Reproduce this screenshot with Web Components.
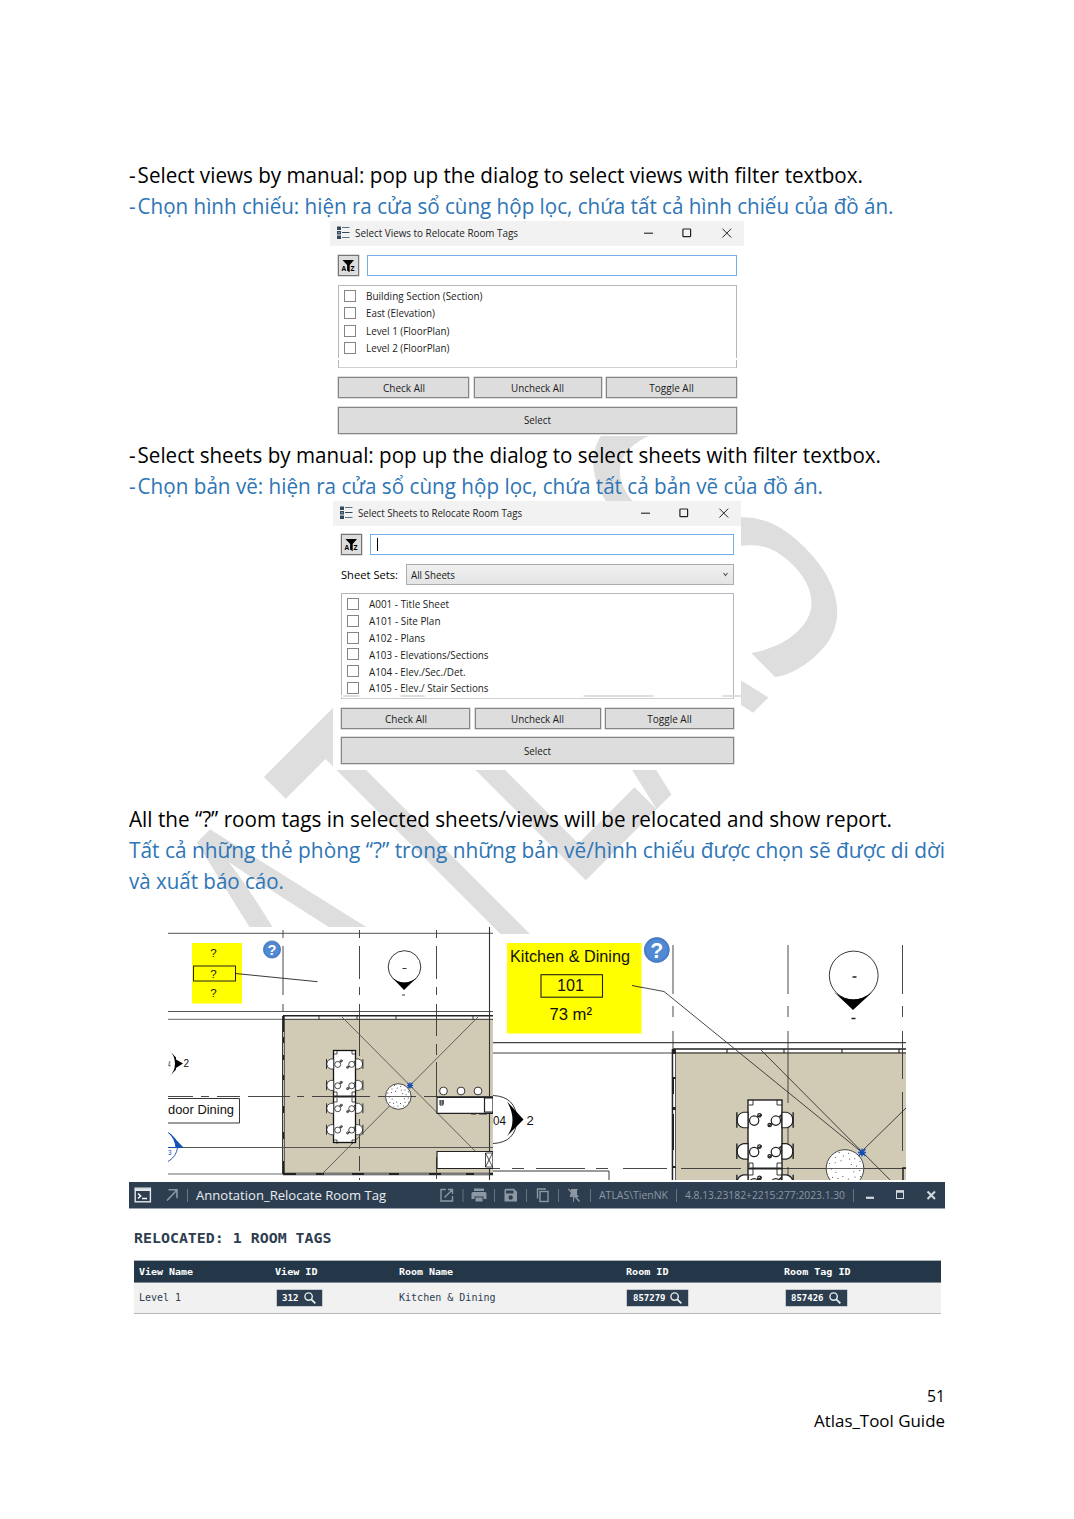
<!DOCTYPE html>
<html lang="vi">
<head>
<meta charset="utf-8">
<title>Atlas_Tool Guide</title>
<style>
html,body{margin:0;padding:0;background:#fff}
body{font-family:"Open Sans","Noto Sans",sans-serif;color:#000}
</style>
</head>
<body>
<guide-page></guide-page>
<script>
const make = (name, html, setup) => {
  const t = document.createElement('template');
  t.innerHTML = html;
  customElements.define(name, class extends HTMLElement {
    connectedCallback() {
      if (this.shadowRoot) return;
      this.attachShadow({mode:'open'}).appendChild(t.content.cloneNode(true));
      if (setup) setup(this, this.shadowRoot);
    }
  });
};

/* One line of text set to an exact measure */
make('fit-text', `<style>
:host{display:block;flex:none;white-space:nowrap}
span{display:inline-block;transform-origin:0 50%;white-space:nowrap}
</style><span><slot></slot></span>`, (el, r) => {
  const w = +el.getAttribute('w'), s = r.querySelector('span');
  el.style.width = w + 'px';
  const n = s.getBoundingClientRect().width;
  if (n) s.style.transform = `scaleX(${w / n})`;
});

make('water-mark', `<style>:host{display:block;position:absolute;inset:0;z-index:0}
svg{display:block}text{font:421px "Open Sans",sans-serif;fill:#dedede}</style>
<svg width="1074" height="1519" viewBox="0 0 1074 1519"><g transform="rotate(-45) scale(.595 1)">
<text y="1036.6" x="-885 -613.5 -391 -181.5 95">ATLAS</text></g></svg>`);

make('win-button', `<style>:host{display:flex;align-items:center;justify-content:center;box-sizing:border-box;background:#ddd;border:1px solid #858585;box-shadow:0 0 0 .4px #aaa;font-size:10px;color:#1a1a1a}
</style><slot></slot>`);

make('check-row', `<style>:host{display:flex;align-items:center;height:var(--row);font-size:10px;color:#1a1a1a;line-height:var(--row)}
i{width:10px;height:10px;border:1px solid #858585;background:#fff;margin:0 9.5px 0 5px;flex:none;position:relative;top:-.7px}
</style><i></i><slot></slot>`);

make('filter-button', `<style>:host{display:block;width:19px;height:19px;border:1px solid #747474;background:#ddd;box-shadow:0 0 0 .4px #aaa;flex:none}svg{display:block}text{font:bold 6.5px "Open Sans",sans-serif}</style>
<svg width="19" height="19" viewBox="0 0 19 19"><path d="M3.5 4h11.5l-4.3 5v7.2l-2.6-1.6V9z" fill="#000"/><text x="2.6" y="14.8" textLength="4.6" lengthAdjust="spacingAndGlyphs">A</text><text x="11.6" y="14.8" textLength="4" lengthAdjust="spacingAndGlyphs">Z</text></svg>`);

make('title-bar', `<style>:host{display:flex;align-items:center;height:25px;background:#f2f2f2;padding-left:7px;padding-bottom:2px;font-size:10.3px;color:#222;box-sizing:border-box}
svg{display:block;flex:none}.c{margin-left:auto;margin-right:11.5px}slot{display:block}fit-text{line-height:23px}.l{margin-right:5px}</style>
<svg class="l" width="13" height="13" viewBox="0 0 13 13"><g fill="#34485c"><path d="M0 .5h4v3.6H0zM0 5h4v3.6H0zM0 9.4h4V13H0z"/><path d="M5 1.2h7.5v.9H5zM5 6h7.5v.9H5zM5 10.9h7.5v.9H5z"/></g><path d="M1.4 6h1.4v1.2H1.4z" fill="#aab"/></svg>
<slot></slot>
<svg class="c" width="90" height="12" viewBox="0 0 90 12" fill="none" stroke="#222"><path d="M1 6.2h9" stroke-width="1.1"/><rect x="39.9" y="2" width="7.7" height="7.7" rx=".7" stroke-width="1.2"/><path d="M79.4 1.7l8.8 8.8m0-8.8l-8.8 8.8" stroke-width="1"/></svg>`);

make('select-dialog', `<style>
:host{display:block;position:relative;background:#fff;box-sizing:border-box;flex:none}
.b{padding:var(--pt) 7px 0 8px;display:flex;flex-direction:column}
.f{display:flex;gap:8px;align-items:center;height:21px}
.in{flex:1;border:1px solid #76aee8;box-sizing:border-box;height:21px;display:flex;align-items:center;padding-left:6px}
.caret{width:1px;height:13px;background:#000;display:none}
:host([caret]) .caret{display:block}
.list{margin-top:var(--lg);height:var(--lh);box-sizing:border-box;border:1px solid #b4b6be;border-bottom:1.5px solid #cfd0d6;padding-top:var(--lp)}
.btns{display:grid;grid-template-columns:var(--cols);justify-content:space-between;margin-top:9px}
.btns win-button{height:21px}
.s{height:27px;margin-top:var(--sg)}
</style>
<slot name="title"></slot>
<div class="b"><div class="f"><filter-button></filter-button><div class="in"><div class="caret"></div></div></div>
<slot name="sets"></slot>
<div class="list"><slot></slot></div>
<div class="btns"><win-button><fit-text w="42">Check All</fit-text></win-button><win-button><fit-text w="53">Uncheck All</fit-text></win-button><win-button><fit-text w="44.5">Toggle All</fit-text></win-button></div>
<win-button class="s"><fit-text w="27">Select</fit-text></win-button></div>
<slot name="seam"></slot>`);

make('sheet-sets', `<style>:host{display:flex;align-items:center;height:21px;margin-top:9px;font-size:11px}
.c{margin-left:8px;flex:1;height:21px;box-sizing:border-box;border:1px solid #acacac;background:linear-gradient(#f0f0f0,#e4e4e4);display:flex;align-items:center;justify-content:space-between;padding:0 5px 0 4px;font-size:10px;color:#1a1a1a;line-height:18px}
svg{display:block}</style><fit-text w="57">Sheet Sets:</fit-text><div class="c"><fit-text w="44">All Sheets</fit-text><svg width="5" height="5" viewBox="0 0 5 5"><path d="M.5 1l2 2.6L4.5 1" fill="none" stroke="#555" stroke-width="1.1"/></svg></div>`);

/* Floor plans before and after relocating the room tag */
const chairs = (cx, top, rows, pitch, hw, k) => {
  let s = '';
  for (let i = 0; i < rows; i++) {
    const y = top + i * pitch + (k < 1.2 && i > 1 ? 1.5 : 0);
    for (const d of [-1, 1]) {
      s += `<g transform="translate(${cx} ${y}) scale(${d * k} ${k})"><path d="M${hw / k} -5h3q4 1 4 5t-4 5h-3z" fill="#fff" stroke-width=".8"/><path d="M${hw / k + 7.2} -5v10" stroke-width=".9"/></g>`;
      s += `<g transform="translate(${cx} ${y}) scale(${k})" fill="none" stroke-width=".8"><circle cx="${d * 7}" cy=".4" r="3"/><circle cx="${d < 0 ? -3.6 : 3}" cy="${d < 0 ? -3 : 3.2}" r="1.1"/><path d="M${d < 0 ? '-5 -2l3 -1.5' : '5 2.4l-3 1.4M9 -2l1.4 -1.2v4'}"/></g>`;
    }
  }
  return s;
};
const speck = (cx, cy, r) => {
  let s = '';
  for (let i = 5; i < 30; i++) {
    const a = i * 2.4, q = r * Math.sqrt((i + .5) / 31) * .95;
    s += `<circle cx="${(cx + q * Math.cos(a)).toFixed(1)}" cy="${(cy + q * Math.sin(a)).toFixed(1)}" r=".5" fill="#222" stroke="none"/>`;
  }
  return `<circle cx="${cx}" cy="${cy}" r="${r}" fill="#fff" stroke="#222" stroke-width=".8"/>${s}`;
};
const help = (x, y, r) => `<circle cx="${x}" cy="${y}" r="${r}" fill="#4a80cb" stroke="#4472b4" stroke-width=".8"/><circle cx="${x}" cy="${y}" r="${r * .84}" fill="#5089d4" stroke="none"/><text x="${x}" y="${y + r * .6}" text-anchor="middle" style="fill:#fff" font-weight="bold" font-size="${r * 1.7}">?</text>`;

make('room-plans', `<style>:host{display:block;position:relative}svg{display:block}text{font-family:"Liberation Sans",sans-serif;fill:#111;stroke:none}</style>
<svg width="738" height="254" viewBox="168 927 738 254" stroke="#222" stroke-width=".9">
<defs><clipPath id="l"><rect x="168" y="927" width="325" height="253"/></clipPath><clipPath id="r"><rect x="493" y="934" width="413" height="246"/></clipPath></defs>
<g clip-path="url(#l)"><rect x="168" y="927" width="325" height="253" fill="#fff" stroke="none"/>
<path d="M168 933.3h325" stroke="#777" stroke-width="1.3"/><path d="M168 1011.5h325" stroke="#555" stroke-width="1"/><path d="M168 1019.3h115M168 1174h115" stroke="#555"/>
<rect x="283" y="1016" width="212" height="158" fill="#d1cab5" stroke="none"/>
<path d="M283 1017.4h210" stroke="#fff" stroke-width="3"/><path d="M283 1015.8h210" stroke-width="1.6"/><path d="M283 1019.3h210M319 1016v3.5M357 1016v3.5M396 1016v3.5M473 1016v3.5"/>
<path d="M283.4 1016v158" stroke-width="2.6"/><path d="M283.6 1032v5m0 6v12m0 5v15m0 5v26m0 7v19m0 7v22" stroke="#fff" stroke-width=".8"/>
<path d="M283 1174h210" stroke-width="2.4"/><path d="M296 1174h20m8 0h28m12 0h25m10 0h30m12 0h25m8 0h15" stroke="#fff" stroke-width=".8"/>
<path d="M283 930v8m0 8v49m0 9v7M359.500 930v8m0 8v33m0 8v8m0 9v52m0 7v6m0 50v30m0 7v15m0 7v17M436.500 930v8m0 8v33m0 8v8m0 9v32m0 8v11m0 7v35m0 60v22" stroke="#333"/>
<path d="M489.500 927v253" stroke="#333" stroke-width="1.1"/>
<path d="M168 1096.500h25m8 0h8m8 0h23m8 0h42m7 0h7m8 0h58m8 0h24m7 0h7m8 0h75" stroke="#333"/>
<path d="M168 1147.500h325" stroke="#555" stroke-width="1"/>
<path d="M342 1017l147 148M478 1017L322 1174" stroke="#555" stroke-width=".9"/>
<rect x="333.500" y="1050.500" width="22" height="92" fill="#fff" stroke="#111" stroke-width="1.3"/><path d="M333 1096.500h23" stroke-width="2"/><path d="M334 1054h3v-3m15 0v3h3m-21 38h3v4m15 0v-4h3m-21 10h3v-4m15 0v4h3m-21 38h3v4m15 0v-4h3" fill="none" stroke-width=".8"/>
${chairs(344.7,1064,4,21.4,11,1)}
${speck(398.300,1096.500,12.800)}<path d="M385 1096.500h26" stroke="#555"/>
<path d="M407.500 1083l5 5m0-5l-5 5m-.5-2.500h6m-3-3v6" stroke="#134fb4" stroke-width="1.200"/>
<g fill="#fff"><circle cx="443.500" cy="1091" r="3.900"/><circle cx="461" cy="1091" r="3.900"/><circle cx="478" cy="1091" r="3.900"/><path d="M437 1097.500h56v15.800h-56zM437 1151.500h56v17h-56zM484.500 1098h9v14h-9z" stroke-width="1.2"/></g>
<path d="M440 1101h4m-4 2h4m-4 2h3m0-5v5m-3-5v5M471 1114h5m3 0h8" stroke-width="1"/><path d="M485.500 1153h8v14h-8zm0 0l7 14m0-14l-7 14" fill="none" stroke-width=".8"/>
<rect x="192" y="943" width="50" height="60.500" fill="#ff0" stroke="none"/><rect x="193.500" y="966" width="42" height="15" fill="none" stroke-width="1"/>
<g font-size="11.500" text-anchor="middle"><text x="213.500" y="957">?</text><text x="213.500" y="977.500">?</text><text x="213.500" y="997">?</text></g>
<path d="M235.500 973.500l82 8.200"/>${help(272,949.500,8.600)}
<circle cx="404.500" cy="967" r="16.300" fill="#fff"/><path d="M392 977.500q12 10 25 0L404 990z" fill="#000" stroke="none"/><path d="M402.500 968.500h4m-4.500 26.500h3"/>
<path d="M168 1049l8 8.500v2l7 4-7 4.500v1.500l-8 8.500q7-6 7-14.500t-7-14.500" fill="#000" stroke="none"/>
<text x="183.500" y="1067" font-size="10">2</text><text x="168" y="1067" font-size="9" textLength="2.500" lengthAdjust="spacingAndGlyphs">4</text>
<path d="M168 1098.500h71.500v24.500H168" fill="#fff"/><text x="168" y="1114" font-size="13" textLength="66" lengthAdjust="spacingAndGlyphs">door Dining</text>
<g stroke="#134fb4"><path d="M168 1132.500q9 5 9.500 15-1 9-9.500 14" fill="none"/><path d="M169 1133l14 14.500h-7q-1-9-7-14.500z" fill="#134fb4"/><path d="M168 1147.500h15"/></g><text x="168" y="1155" font-size="8" textLength="3.500" lengthAdjust="spacingAndGlyphs" style="fill:#134fb4">3</text></g>
<g clip-path="url(#r)"><rect x="493" y="934" width="413" height="246" fill="#fff" stroke="none"/>
<path d="M493 1042.600h413M493 1053h180" stroke="#444" stroke-width="1.1"/>
<rect x="673" y="1049" width="240" height="140" fill="#d1cab5" stroke="none"/><path d="M674 1050.500h232" stroke="#fff" stroke-width="3"/><path d="M673 1049h233" stroke-width="1.700"/><path d="M673 1053h233M727 1049v4M784 1049v4M842 1049v4M899 1049v4" stroke-width="1.100"/>
<path d="M673.800 1049v131" stroke-width="4.200"/><path d="M674.200 1054v23m0 2v28m0 3v56m0 2v12" stroke="#fff" stroke-width="2"/><path d="M673.500 1079v15m0 20v36" stroke-width="1"/>
<path d="M673 945v49m0 12v11m0 14v18M788 945v49m0 12v11m0 14v72m0 13v42m0 9v13M902.500 945v49m0 12v11m0 14v48m0 13v59" stroke="#333"/>
<path d="M493 1168.500h7m12 0h12m12 0h49m11 0h12m15 0h44m14 0h60m12 0h12m13 0h50m12 0h82" stroke="#333"/>
<path d="M493 1171h116v10" fill="none"/>
<rect x="748" y="1100" width="34" height="90" fill="#fff" stroke="#111" stroke-width="1.300"/><path d="M748 1168.500h34" stroke-width="2"/><path d="M749 1105h4v-5m24 0v5h5m-33 62v-4h4v5m24 0v-5h5m-33 12h4v-6m24 0v6h5" fill="none"/>
${chairs(765,1120,3,31.300,17,1.550)}
${speck(845,1168.500,18.800)}<path d="M826 1168.500h38" stroke="#555"/>
<path d="M761 1050l145 146M861 1152l45-44M632 985.500l32 6 197 160" fill="none" stroke="#333" stroke-width=".9"/>
<path d="M858.500 1149l7 7m0-7l-7 7m-.5-3.500h8m-4-4v8" stroke="#134fb4" stroke-width="1.300"/>
<path d="M903 1180v-12h4" fill="none" stroke-width="1.500"/>
<rect x="507" y="943" width="134.500" height="90.500" fill="#ff0" stroke="none"/><rect x="541" y="974.700" width="61.500" height="22.500" fill="none" stroke-width="1.100"/>
<text x="510" y="961.500" font-size="17" textLength="120" lengthAdjust="spacingAndGlyphs">Kitchen &amp; Dining</text><text x="557" y="991.200" font-size="17" textLength="27" lengthAdjust="spacingAndGlyphs">101</text><text x="549.500" y="1020.300" font-size="17" textLength="42.500" lengthAdjust="spacingAndGlyphs">73 m²</text>
<path d="M632 985.500l10 2"/>${help(656.800,950,12.500)}
<circle cx="853.700" cy="975.500" r="24.400" fill="#fff"/><path d="M834 992q19 15 38.500 0L853 1010z" fill="#000" stroke="none"/><path d="M852.500 977h4m-5 41.500h4" stroke-width="1.500"/>
<path d="M493 1095.500q23 1 24 24-1 23-24 24" fill="none"/><path d="M507 1101.500l16.500 18L507 1136q11-15 0-34.500z" fill="#000" stroke="none"/>
<text x="526.500" y="1124.500" font-size="13">2</text><text x="493" y="1124.500" font-size="13" textLength="13" lengthAdjust="spacingAndGlyphs">04</text></g></svg>`);

make('console-bar', `<style>:host{display:flex;align-items:center;background:#2d3e50;border-bottom:1px solid #9aa3ac;box-sizing:border-box;height:27px;color:#8e98a3;font-size:11px;position:relative;width:816px;line-height:26px}
svg{display:block}.t{color:#e9edf0;font-size:13.5px;margin-left:8px}.a{margin-left:5px}.i{margin-left:53px}.u{margin-left:7px}.m{margin-left:8px}.v{margin-left:8px}.w{margin-left:8px}</style>
<svg class="a" width="54" height="26" viewBox="134 0 54 26" fill="none"><rect x="135.200" y="6.200" width="15.200" height="13.600" stroke="#e3e7ea" stroke-width="1.400"/><path d="M135 8h15.500" stroke="#e3e7ea" stroke-width="2"/><path d="M138 11.500l2.700 2.500-2.700 2.500M142 16.500h5" stroke="#fff" stroke-width="1.500"/><path d="M167 18.500L177 8M168.500 7.700h8.500v8.500" stroke="#8e98a3" stroke-width="1.600"/><path d="M187.500 7v13" stroke="#6c7884"/></svg>
<fit-text class="t" w="190">Annotation_Relocate Room Tag</fit-text>
<svg class="i" width="153" height="26" viewBox="439 0 153 26" fill="none" stroke="#8e98a3" stroke-width="1.400"><path d="M446 7.500h-5v11.500h11.500v-5M448 7.500h4.500V12M444.500 15.500l8-8"/><path d="M463 7v13M494.500 7v13M526.500 7v13M558.500 7v13M590.500 7v13" stroke="#65727f" stroke-width="1"/>
<g fill="#8e98a3" stroke="none"><path d="M474 6.500h10v2.500h-10zM473 10h12q1.500 0 1.500 1.500v5.500h-3v-2.500h-9V17h-3v-5.500q0-1.500 1.500-1.500zM475.500 15.500h7v4h-7z"/><path fill-rule="evenodd" d="M505.500 6.700h8.500l3 3v9.800h-12.500V7.700zM506 8.500v3h7.500v-3zM510.700 13.300a2.200 2.200 0 100 4.400 2.200 2.200 0 000-4.400z"/></g>
<rect x="540" y="9.500" width="8" height="10"/><path d="M537.500 16.500V7h8.500"/><path d="M571 7h7l-1 1.500v4l2 2.500h-3.300L571 9z" fill="#8e98a3" stroke="none"/><path d="M571.500 10.500l-1.500 4h3.500v5l.6-5" fill="#8e98a3" stroke-width=".8"/><path d="M568.500 7l11 12.500"/></svg>
<fit-text class="u" w="69">ATLAS\\TienNK</fit-text>
<svg class="m" width="1" height="26" viewBox="0 0 1 26"><path d="M.5 7v13" stroke="#65727f"/></svg>
<fit-text class="v" w="160">4.8.13.23182+2215:277:2023.1.30</fit-text>
<svg class="w" width="92" height="26" viewBox="853 0 92 26" fill="none" stroke="#d5dadd"><path d="M853.500 7v13" stroke="#65727f"/><path d="M866 15.800h8" stroke-width="2.200"/><rect x="896.500" y="9" width="7" height="7.500"/><path d="M896 9.500h8" stroke-width="2.500"/><path d="M927.500 9.500l7.500 7.500m0-7.500l-7.500 7.500" stroke-width="2"/></svg>`);

make('id-chip', `<style>:host{display:flex;align-items:center;gap:5px;height:16px;background:#2d3e50;color:#fff;padding:0 6px 0 5.500px;box-sizing:border-box;font-size:9px;line-height:16px;width:max-content;box-shadow:0 0 0 .5px #9aa3ac}svg{display:block}</style><slot></slot><svg width="12" height="12" viewBox="0 0 12 12" fill="none" stroke="#e9edf0"><circle cx="4.600" cy="4.600" r="3.700" stroke-width="1.400"/><path d="M7.300 7.300L11.300 11.300" stroke-width="1.800"/></svg>`);

make('report-view', `<style>:host{display:block;font-family:"DejaVu Sans Mono",monospace;color:#2d3e50;width:807px;padding-left:5px}
.h{font-weight:bold;font-size:13.500px;height:20px;line-height:20px;margin-top:19px}
.r{display:grid;grid-template-columns:136px 124px 226.500px 158.500px 1fr;padding-left:5px;align-items:center;box-sizing:border-box}
.r>*{justify-self:start}
.hd{background:#243748;color:#fff;font-weight:bold;font-size:9.300px;height:23px;margin-top:12px;line-height:21px;border-top:1px solid #aab3b8;border-bottom:1px solid #7f8b93}
.d{background:#f1f1f1;height:31px;line-height:30px;font-size:10px;border-bottom:1px solid #b5b8ba}id-chip{margin-left:1.500px}</style>
<div class="h"><fit-text w="197.500">RELOCATED: 1 ROOM TAGS</fit-text></div>
<div class="r hd"><fit-text w="54">View Name</fit-text><fit-text w="42.500">View ID</fit-text><fit-text w="54">Room Name</fit-text><fit-text w="42.500">Room ID</fit-text><fit-text w="66.500">Room Tag ID</fit-text></div>
<div class="r d"><fit-text w="42">Level 1</fit-text><id-chip><fit-text w="16.500"><b>312</b></fit-text></id-chip><fit-text w="96.500">Kitchen &amp; Dining</fit-text><id-chip><fit-text w="32.500"><b>857279</b></fit-text></id-chip><id-chip><fit-text w="32.500"><b>857426</b></fit-text></id-chip></div>`);

make('guide-page', `<style>
:host{display:block;position:relative;width:1074px;height:1519px;overflow:hidden;background:#fff}
main{position:relative;z-index:1;display:flex;flex-direction:column;padding:159px 129px 0}
p{margin:0;font-size:21.300px;line-height:31px;height:31px}
.vi{color:#2e75b6}
i{font-style:normal;letter-spacing:2px}
.d1{width:414px;height:215px;margin:0 0 0 201px;--pt:9px;--sg:8.500px;--row:17.300px;--lg:9px;--lh:83px;--lp:2px;--cols:131px 128px 131px}
.d2{width:408px;height:269px;margin:0 0 0 204px;--pt:8px;--sg:8px;--row:16.900px;--lg:8px;--lh:106px;--lp:2px;--cols:129px 126px 129px}
.g1{margin-top:3px}.g2{margin-top:33px}
room-plans{margin:31px 0 0 39px}console-bar{margin-top:1px}
.seam{position:absolute;left:0;right:0;top:193.500px;height:2px;background:linear-gradient(90deg,#fff 2%,#dedede 3% 6%,#fff 7% 16%,#dedede 17% 22%,#fff 23% 61%,#dedede 62% 78%,#fff 79% 95%,#dedede 96%)}
.s1{position:absolute;left:0;right:0;top:136.500px;height:2px;background:#fff}
footer{margin-top:70px;display:flex;flex-direction:column;align-items:flex-end;font-size:16.500px;line-height:24.500px;padding-right:.5px}
</style>
<water-mark></water-mark>
<main>
<p><fit-text w="734"><i>-</i>Select views by manual: pop up the dialog to select views with filter textbox.</fit-text></p>
<p class="vi"><fit-text w="764.500"><i>-</i>Chọn hình chiếu: hiện ra cửa sổ cùng hộp lọc, chứa tất cả hình chiếu của đồ án.</fit-text></p>
<select-dialog class="d1"><title-bar slot="title"><fit-text w="163">Select Views to Relocate Room Tags</fit-text></title-bar>
<check-row><fit-text w="116.500">Building Section (Section)</fit-text></check-row><check-row><fit-text w="69">East (Elevation)</fit-text></check-row><check-row><fit-text w="83.500">Level 1 (FloorPlan)</fit-text></check-row><check-row><fit-text w="83.500">Level 2 (FloorPlan)</fit-text></check-row><div slot="seam" class="s1"></div></select-dialog>
<p class="g1"><fit-text w="752"><i>-</i>Select sheets by manual: pop up the dialog to select sheets with filter textbox.</fit-text></p>
<p class="vi"><fit-text w="694"><i>-</i>Chọn bản vẽ: hiện ra cửa sổ cùng hộp lọc, chứa tất cả bản vẽ của đồ án.</fit-text></p>
<select-dialog class="d2" caret><title-bar slot="title"><fit-text w="164">Select Sheets to Relocate Room Tags</fit-text></title-bar><sheet-sets slot="sets"></sheet-sets>
<check-row><fit-text w="80">A001 - Title Sheet</fit-text></check-row><check-row><fit-text w="71.500">A101 - Site Plan</fit-text></check-row><check-row><fit-text w="56">A102 - Plans</fit-text></check-row><check-row><fit-text w="119.500">A103 - Elevations/Sections</fit-text></check-row><check-row><fit-text w="96.500">A104 - Elev./Sec./Det.</fit-text></check-row><check-row><fit-text w="119.500">A105 - Elev./ Stair Sections</fit-text></check-row><div slot="seam" class="seam"></div></select-dialog>
<p class="g2"><fit-text w="763">All the “?” room tags in selected sheets/views will be relocated and show report.</fit-text></p>
<p class="vi"><fit-text w="816">Tất cả những thẻ phòng “?” trong những bản vẽ/hình chiếu được chọn sẽ được di dời</fit-text></p>
<p class="vi"><fit-text w="155">và xuất báo cáo.</fit-text></p>
<room-plans></room-plans>
<console-bar></console-bar>
<report-view></report-view>
<footer><fit-text w="18">51</fit-text><fit-text w="131">Atlas_Tool Guide</fit-text></footer>
</main>`);
</script>
</body>
</html>
